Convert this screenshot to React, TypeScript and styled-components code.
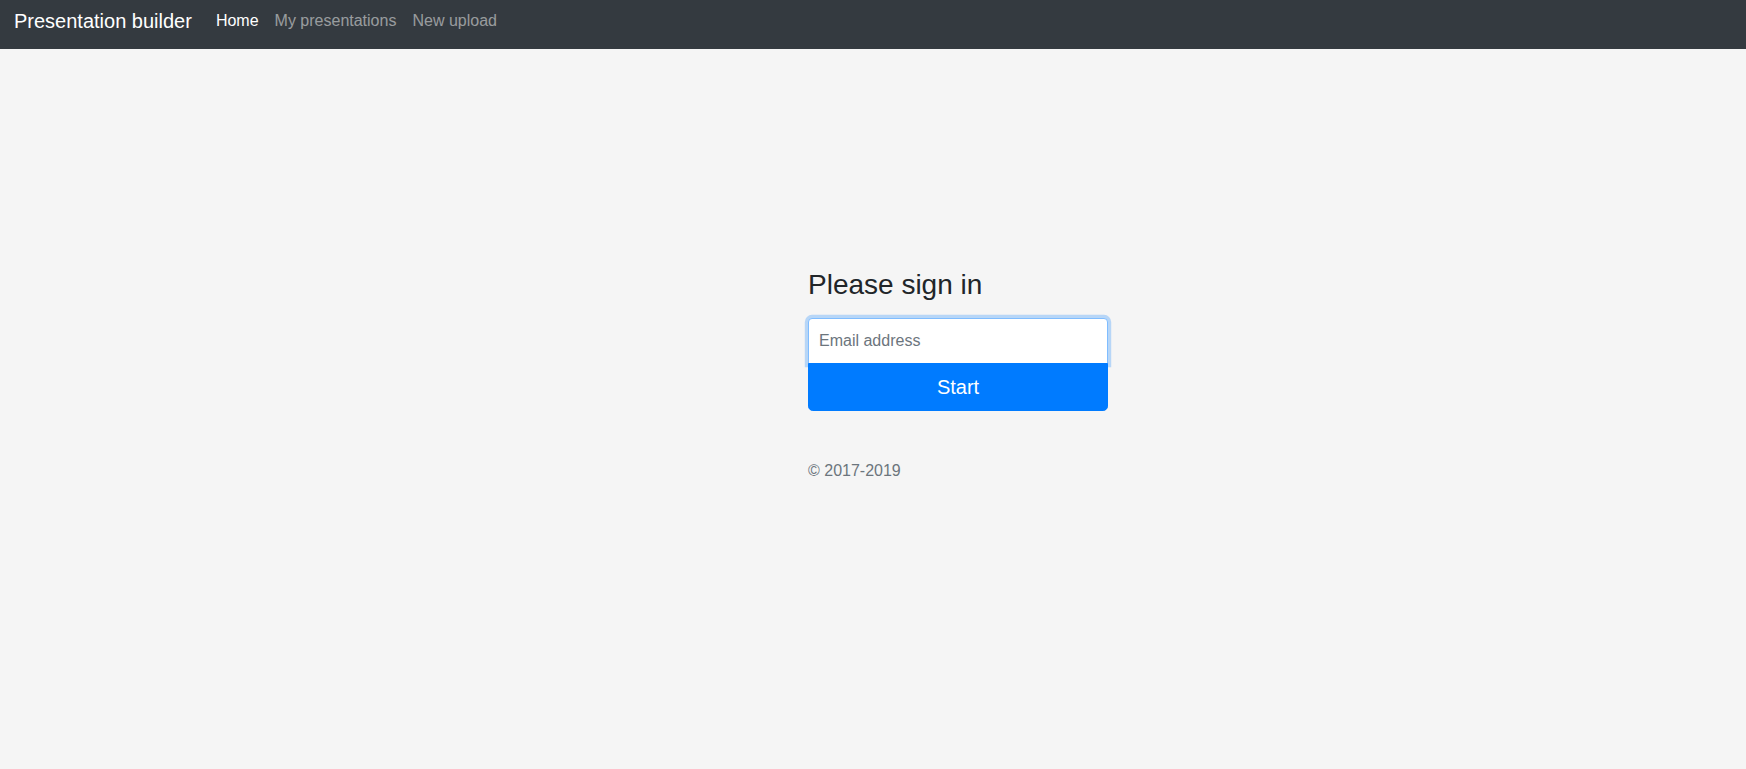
import { useState } from "react";
import styled, { createGlobalStyle } from "styled-components";

// ─── Global ──────────────────────────────────────────────────────────────────

const GlobalStyle = createGlobalStyle`
  html, body {
    margin: 0;
    padding: 0;
    height: 100%;
  }

  body {
    background: #f5f5f5;
    color: #212529;
    font-family: "Liberation Sans", Arial, sans-serif;
    font-size: 16px;
    line-height: 1.5;
  }

  #root {
    min-height: 100%;
  }

  *, *::before, *::after {
    box-sizing: border-box;
  }
`;

// ─── Styled Components ───────────────────────────────────────────────────────

const StyledPage = styled.div`
  min-height: 100vh;
  display: flex;
  flex-direction: column;
`;

const StyledNavbar = styled.nav`
  height: 49px;
  flex-shrink: 0;
  display: flex;
  align-items: center;
  padding: 0 14px 7px;
  background: #343a40;
`;

const StyledBrand = styled.a`
  margin-right: 16px;
  font-size: 20px;
  line-height: 30px;
  color: #fff;
  text-decoration: none;
  white-space: nowrap;
`;

const StyledNavList = styled.ul`
  display: flex;
  margin: 0;
  padding: 0;
  list-style: none;
`;

const StyledNavLink = styled.a<{ $active?: boolean }>`
  display: block;
  padding: 0 8px;
  line-height: 24px;
  color: ${({ $active }) => ($active ? "#fff" : "rgba(255, 255, 255, 0.5)")};
  text-decoration: none;
`;

const StyledMain = styled.main`
  flex: 1 1 auto;
  display: flex;
  align-items: center;
  justify-content: center;
  padding: 0 0 51px 170px;
`;

const StyledForm = styled.form`
  width: 100%;
  max-width: 330px;
  padding: 15px;
`;

const StyledHeading = styled.h1`
  margin: 0 0 16px;
  font-size: 28px;
  font-weight: 400;
  line-height: 1.2;
`;

const StyledInput = styled.input`
  display: block;
  width: 100%;
  height: auto;
  margin-bottom: -1px;
  padding: 10px;
  font-family: inherit;
  font-size: 16px;
  line-height: 24px;
  color: #495057;
  background: #fff;
  border: 1px solid #ced4da;
  border-radius: 4px 4px 0 0;
  outline: none;

  &::placeholder {
    color: #6c757d;
  }

  &:focus {
    border-color: #80bdff;
    box-shadow: 0 0 0 3.2px rgba(0, 123, 255, 0.25);
  }
`;

const StyledButton = styled.button`
  display: block;
  width: 100%;
  padding: 8px 16px;
  font-family: inherit;
  font-size: 20px;
  line-height: 30px;
  color: #fff;
  background: #007bff;
  border: 1px solid #007bff;
  border-radius: 0 0 4.8px 4.8px;
  cursor: pointer;
`;

const StyledCopyright = styled.p`
  margin: 48px 0 16px;
  color: #6c757d;
`;

// ─── Component ───────────────────────────────────────────────────────────────

const NAV_ITEMS = [
  { label: "Home", active: true },
  { label: "My presentations", active: false },
  { label: "New upload", active: false },
];

const App = () => {
  const [email, setEmail] = useState("");

  return (
    <>
      <GlobalStyle />
      <StyledPage>
        <StyledNavbar>
          <StyledBrand href="#">Presentation builder</StyledBrand>
          <StyledNavList>
            {NAV_ITEMS.map((item) => (
              <li key={item.label}>
                <StyledNavLink href="#" $active={item.active}>
                  {item.label}
                </StyledNavLink>
              </li>
            ))}
          </StyledNavList>
        </StyledNavbar>

        <StyledMain>
          <StyledForm onSubmit={(e) => e.preventDefault()}>
            <StyledHeading>Please sign in</StyledHeading>
            <StyledInput
              type="email"
              placeholder="Email address"
              value={email}
              onChange={(e) => setEmail(e.target.value)}
              autoFocus
            />
            <StyledButton type="submit">Start</StyledButton>
            <StyledCopyright>© 2017-2019</StyledCopyright>
          </StyledForm>
        </StyledMain>
      </StyledPage>
    </>
  );
};

App.displayName = "App";
export default App;
